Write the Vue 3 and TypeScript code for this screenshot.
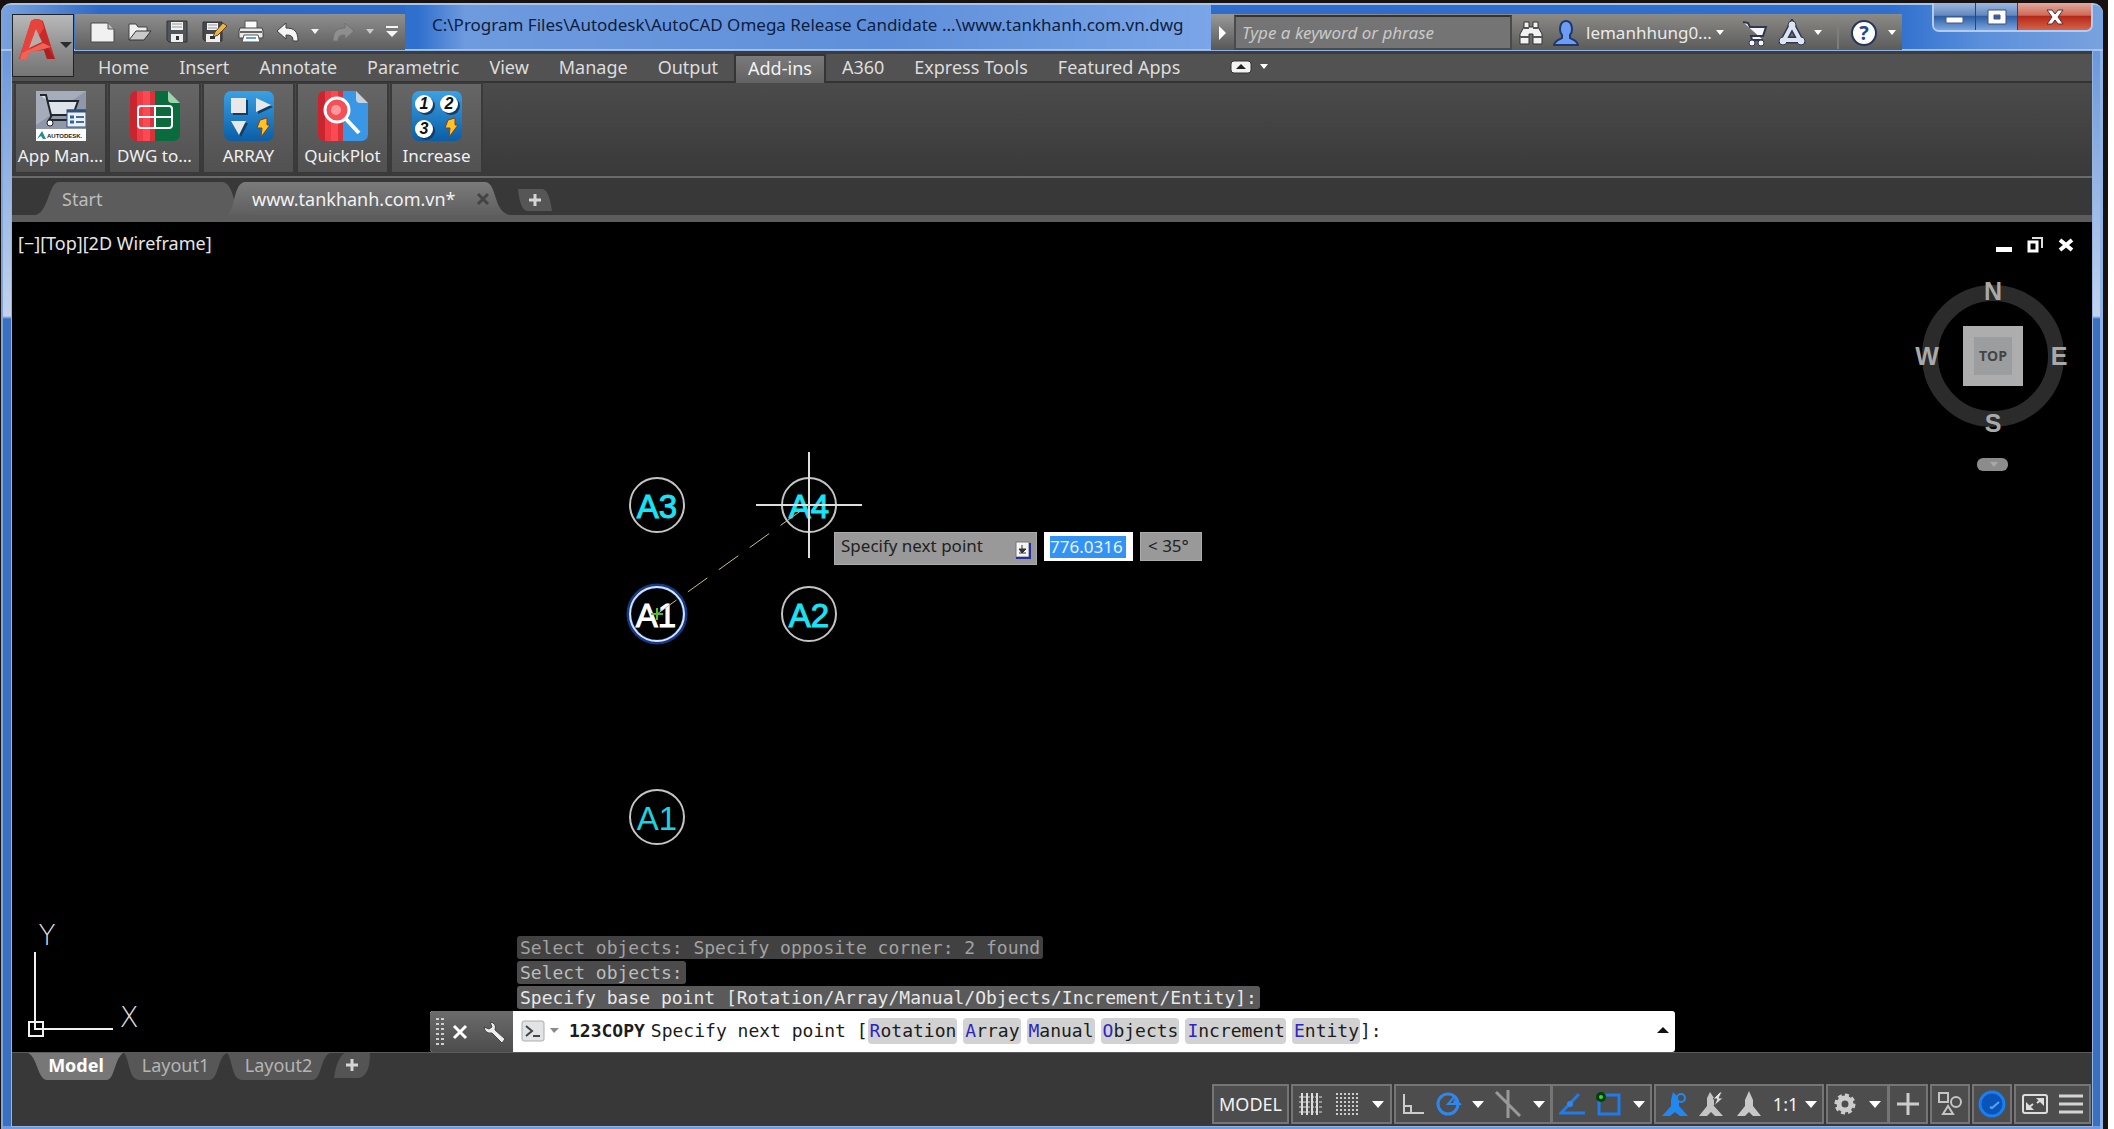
<script setup lang="ts">
import { ref } from 'vue'

const ribbonTabs = [
  'Home', 'Insert', 'Annotate', 'Parametric', 'View', 'Manage',
  'Output', 'Add-ins', 'A360', 'Express Tools', 'Featured Apps',
]
const activeTab = ref('Add-ins')

const history = [
  { text: 'Select objects: Specify opposite corner: 2 found', tone: 'old' },
  { text: 'Select objects:', tone: 'mid' },
  { text: 'Specify base point [Rotation/Array/Manual/Objects/Increment/Entity]:', tone: 'new' },
]
const options = ['Rotation', 'Array', 'Manual', 'Objects', 'Increment', 'Entity']

interface Bubble { x: number; y: number; label: string; tone: string }
const bubbles: Bubble[] = [
  { x: 645, y: 283, label: 'A3', tone: 'bold' },
  { x: 797, y: 283, label: 'A4', tone: 'bold' },
  { x: 797, y: 392, label: 'A2', tone: 'bold' },
  { x: 645, y: 595, label: 'A1', tone: 'plain' },
]
const search = ref('')
const distance = ref('776.0316')
const gridDots = [0, 1, 2, 3, 4, 5]
</script>

<template>
  <div class="desktop">
    <div class="window">
      <header class="titlebar">
        <button class="app-button" aria-label="Application menu">
          <svg width="61" height="61" viewBox="0 0 61 61">
            <path d="M6 44 18 6q5-4 12 0l12 38h-8l-3-9-15 2-2 7z" fill="#c9292b" />
            <path d="M18 6q5-4 11 0l2 7-12 18-4 6-9 7z" fill="#e8433b" />
            <path d="M23 14l6 13-13 6z" fill="#b5aeab" />
            <path d="M9 38l21-10 8 4-22 6-2 6H7z" fill="#ef6355" />
            <path d="M31 35l4-2 7 11h-8z" fill="#a91f24" />
            <path d="M47 27h12l-6 6z" fill="#2b2b2b" />
          </svg>
        </button>
        <nav class="qat" aria-label="Quick access">
          <button aria-label="New"><svg width="28" height="26" viewBox="0 0 28 26"><path d="M2 4h17l6 6v13H2z" fill="#f1f1f1" stroke="#494949" /><path d="M19 4v6h6" fill="#bbb" stroke="#555" /></svg></button>
          <button aria-label="Open"><svg width="28" height="26" viewBox="0 0 28 26"><path d="M3 21V5h7l2 3h9v4" fill="#f1f1f1" stroke="#444" /><path d="M3 21l7-9h15l-7 9z" fill="#c9c9c9" stroke="#333" /></svg></button>
          <button aria-label="Save"><svg width="28" height="26" viewBox="0 0 28 26"><path d="M4 2h20v21H6l-2-2z" fill="#50545b" stroke="#333" /><path d="M8 3h12v8H8z" fill="#f2f2f2" /><path d="M9 5h10M9 8h10" stroke="#999" /><path d="M8 15h12v8H8z" fill="#eee" /><path d="M13 17h3v4h-3z" fill="#333" /></svg></button>
          <button aria-label="Save As"><svg width="28" height="26" viewBox="0 0 28 26"><path d="M3 3h19v19H5l-2-2z" fill="#45484d" stroke="#333" /><path d="M7 4h11v7H7z" fill="#f2f2f2" /><path d="M8 6h9M8 9h9" stroke="#999" /><path d="M6 15h14v8H6z" fill="#eee" /><path d="M13 18l2-5 8-9 4 3-9 9z" fill="#f1b443" stroke="#5b4420" /><path d="M10 17h5v3h-5z" fill="#333" /></svg></button>
          <button aria-label="Plot"><svg width="28" height="26" viewBox="0 0 28 26"><path d="M8 2h12v8H8z" fill="#fafafa" stroke="#555" /><path d="M3 9h22l1 3v7H2v-7z" fill="#e9e9e9" stroke="#444" /><path d="M3 13h22" stroke="#666" stroke-width="2" /><path d="M7 16h14l2 7H5z" fill="#fff" stroke="#555" /><path d="M9 19h10" stroke="#68a0d6" stroke-width="2" /></svg></button>
          <button aria-label="Undo"><svg width="28" height="26" viewBox="0 0 28 26"><path d="M3 12l9-8v5c8 0 12 3 12 13h-5c0-5-2-6-7-6v4z" fill="#f4f4f4" stroke="#3f3f3f" /></svg></button>
          <button class="caret" aria-label="Undo list"><svg width="10" height="6"><path d="M1 0h8L5 5z" fill="#f4f4f4" /></svg></button>
          <button aria-label="Redo"><svg width="28" height="26" viewBox="0 0 28 26"><path d="M25 12l-9-8v5c-8 0-12 3-12 13h5c0-5 2-6 7-6v4z" fill="#8e8e8e" stroke="#707070" /></svg></button>
          <button class="caret" aria-label="Redo list"><svg width="10" height="6"><path d="M1 0h8L5 5z" fill="#ccc" /></svg></button>
          <button class="more" aria-label="Customize"><svg width="14" height="14"><path d="M1 2h12" stroke="#f4f4f4" stroke-width="2" /><path d="M1 6h12l-6 6z" fill="#f4f4f4" /></svg></button>
        </nav>
        <h1 class="caption">C:\Program Files\Autodesk\AutoCAD Omega Release Candidate ...\www.tankhanh.com.vn.dwg</h1>
        <div class="infocenter">
          <button class="expander" aria-label="Collapse search"><svg width="8" height="14"><path d="M0 0l7 7-7 7z" fill="#fff" /></svg></button>
          <input v-model="search" class="search" type="text" aria-label="Search" placeholder="Type a keyword or phrase">
          <button class="info-find" aria-label="Find"><svg width="28" height="26" viewBox="0 0 28 26"><path d="M7 2h5v5h4V2h5v5l4 7v10h-9V14h-4v10H3V14l4-7z" fill="#f2f2f2" stroke="#333" /><path d="M7 8h5M16 8h5M3 17h9M16 17h9" stroke="#555" stroke-width="2" /></svg></button>
          <button class="user"><svg width="26" height="28" viewBox="0 0 26 28"><path d="M1 26c1-5 5-5 8-7v-3C6 13 6 2 13 2s7 11 4 14v3c3 2 7 2 8 7z" fill="#6d9df0" stroke="#1d3770" stroke-width="2" /></svg><span>lemanhhung0...</span><svg width="10" height="6"><path d="M1 0h8L5 5z" fill="#fff" /></svg></button>
          <button class="info-cart" aria-label="App store"><svg width="28" height="28" viewBox="0 0 28 28"><path d="M2 3l5 1 2 4h16l-3 9H10l1 4h11" fill="#f5f5f8" stroke="#30364e" stroke-width="2" /><circle cx="11" cy="24" r="3" fill="#f5f5f8" stroke="#30364e" /><circle cx="20" cy="24" r="3" fill="#f5f5f8" stroke="#30364e" /></svg></button>
          <button class="info-net" aria-label="A360"><svg width="28" height="28" viewBox="0 0 28 28"><path d="M14 6 6 21h16z" fill="none" stroke="#303852" stroke-width="7" /><circle cx="14" cy="6" r="4" fill="#dfe4f2" stroke="#303852" /><circle cx="5" cy="22" r="4" fill="#dfe4f2" stroke="#303852" /><circle cx="23" cy="22" r="4" fill="#dfe4f2" stroke="#303852" /><path d="M14 6 6 21h16z" fill="none" stroke="#dfe4f2" stroke-width="4" /></svg><svg width="10" height="6"><path d="M1 0h8L5 5z" fill="#fff" /></svg></button>
          <span class="rule" />
          <button class="info-help" aria-label="Help"><svg width="28" height="28" viewBox="0 0 28 28"><circle cx="14" cy="14" r="12" fill="#fff" stroke="#25345c" stroke-width="2" /><text x="14" y="21" text-anchor="middle" class="q">?</text></svg><svg width="10" height="6"><path d="M1 0h8L5 5z" fill="#fff" /></svg></button>
        </div>
        <div class="controls">
          <button class="min" aria-label="Minimize"><svg width="22" height="20"><rect x="2" y="10" width="17" height="6" rx="1" fill="#fff" stroke="#44597e" /></svg></button>
          <button class="max" aria-label="Restore"><svg width="22" height="20"><path d="M2 3h18v14H2zM8 8v4h6V8z" fill="#fff" fill-rule="evenodd" stroke="#3f5276" /></svg></button>
          <button class="close" aria-label="Close"><svg width="22" height="20"><path d="M3 3h5l3 4 3-4h5l-5 7 5 7h-5l-3-4-3 4H3l5-7z" fill="#fff" stroke="#5a2c33" /></svg></button>
        </div>
      </header>

      <div class="body">
        <nav class="tabs" aria-label="Ribbon tabs">
          <button v-for="t in ribbonTabs" :key="t" :class="{ on: t === activeTab }" @click="activeTab = t">{{ t }}</button>
          <button class="fold" aria-label="Minimize ribbon">
            <svg width="22" height="14"><rect x="1" y="1" width="20" height="12" rx="3" fill="#f3f3f3" stroke="#333" /><path d="M6 9l5-5 5 5z" fill="#222" /></svg>
            <svg width="10" height="6"><path d="M1 0h8L5 5z" fill="#fff" /></svg>
          </button>
        </nav>

        <section class="ribbon">
          <button class="panel">
            <svg width="50" height="50" viewBox="0 0 50 50">
              <rect width="50" height="50" fill="#fff" /><rect width="50" height="38" fill="#8f97a8" /><path d="M0 0h50L0 34z" fill="#a5acba" />
              <path d="M4 4h6l5 20h22l5-14H12" fill="#dfe3ea" stroke="#22262f" stroke-width="2" /><path d="M16 24l-3 5h20" fill="none" stroke="#22262f" stroke-width="2" />
              <circle cx="14" cy="32" r="3" fill="#fff" stroke="#222" /><rect x="31" y="19" width="19" height="17" fill="#e8f0fb" stroke="#31507c" /><path d="M31 20h19" stroke="#31507c" stroke-width="3" /><path d="M34 26h4M34 31h4" stroke="#315f9c" stroke-width="3" /><path d="M40 26h8M40 31h8" stroke="#4a6a98" stroke-width="2" />
              <path d="M1 48l5-8 4 8H7l-2-3z" fill="#1b8f9c" /><text x="11" y="47" class="brand">AUTODESK.</text>
            </svg>
            <span>App Man...</span>
          </button>
          <button class="panel">
            <svg width="50" height="50" viewBox="0 0 50 50">
              <defs><clipPath id="r1"><path d="M7 0h31l12 12v31q0 7-7 7H7q-7 0-7-7V7q0-7 7-7z" /></clipPath></defs>
              <g clip-path="url(#r1)"><path d="M0 0h7v50H0z" fill="#c9252f" /><path d="M7 0h7v50H7z" fill="#ee3b45" /><path d="M13 0h11v50H13z" fill="#fb4a52" /><path d="M20 0h5v50h-5z" fill="#d8323b" /><path d="M25 0h25v50H25z" fill="#0a6b3c" /></g>
              <path d="M38 0v8q0 4 4 4h8z" fill="#9fd3ae" />
              <rect x="8" y="15" width="34" height="22" rx="3" fill="none" stroke="#fff" stroke-width="2" /><path d="M25 15v22M8 26h34" stroke="#fff" stroke-width="2" />
            </svg>
            <span>DWG to...</span>
          </button>
          <button class="panel">
            <svg width="50" height="50" viewBox="0 0 50 50">
              <defs><linearGradient id="b1" x2="0" y2="1"><stop stop-color="#3ba0e4" /><stop offset="1" stop-color="#0a5ea6" /></linearGradient></defs>
              <rect width="50" height="50" rx="7" fill="url(#b1)" />
              <path d="M9 9h15v15H9z" fill="#123d66" /><path d="M7 7h15v15H7z" fill="#e8e8e8" /><path d="M34 9l15 7-15 7z" fill="#123d66" /><path d="M32 7l15 7-15 7z" fill="#e8e8e8" /><path d="M9 32h15l-7 14z" fill="#123d66" /><path d="M7 30h15l-7 14z" fill="#e8e8e8" />
              <path d="M36 29l7-2 0 7 3 0-9 12 1-9h-5z" fill="#ffc323" stroke="#8a3c1a" />
            </svg>
            <span>ARRAY</span>
          </button>
          <button class="panel">
            <svg width="50" height="50" viewBox="0 0 50 50">
              <g clip-path="url(#r1)"><path d="M0 0h7v50H0z" fill="#c9252f" /><path d="M7 0h7v50H7z" fill="#ee3b45" /><path d="M13 0h11v50H13z" fill="#fb4a52" /><path d="M20 0h5v50h-5z" fill="#d8323b" /><path d="M25 0h25v50H25z" fill="#3a97e6" /></g>
              <path d="M38 0v8q0 4 4 4h8z" fill="#c5d3df" />
              <circle cx="19" cy="19" r="12" fill="#f4505a" stroke="#fff" stroke-width="3" /><circle cx="18" cy="19" r="5" fill="#ff9a9a" /><path d="M28 28l13 14" stroke="#fff" stroke-width="4" />
            </svg>
            <span>QuickPlot</span>
          </button>
          <button class="panel">
            <svg width="50" height="50" viewBox="0 0 50 50">
              <rect width="50" height="50" rx="7" fill="url(#b1)" />
              <g fill="#123d66"><circle cx="14" cy="15" r="9" /><circle cx="39" cy="15" r="9" /><circle cx="14" cy="40" r="9" /></g>
              <g fill="#fff"><circle cx="12" cy="13" r="9" /><circle cx="37" cy="13" r="9" /><circle cx="12" cy="38" r="9" /></g>
              <g class="num"><text x="12" y="18">1</text><text x="37" y="18">2</text><text x="12" y="43">3</text></g>
              <path d="M36 29l7-2 0 7 3 0-9 12 1-9h-5z" fill="#ffc323" stroke="#8a3c1a" />
            </svg>
            <span>Increase</span>
          </button>
        </section>

        <nav class="files" aria-label="Drawings">
          <button class="file start">
            <svg class="shape" width="200" height="33" viewBox="0 0 200 33" preserveAspectRatio="none"><path d="M0 33C14 33 14 0 24 0h158c14 0 12 33 18 33z" fill="#5c5c5c" /></svg>
            <span>Start</span>
          </button>
          <button class="file current">
            <svg class="shape" width="290" height="33" viewBox="0 0 290 33" preserveAspectRatio="none"><defs><linearGradient id="g1" x2="0" y2="1"><stop stop-color="#7b7b7b" /><stop offset="1" stop-color="#5f5f5f" /></linearGradient></defs><path d="M0 33C10 33 6 0 20 0h242c14 0 8 33 28 33z" fill="url(#g1)" /></svg>
            <span>www.tankhanh.com.vn*</span>
            <svg width="14" height="14"><path d="M2 2l10 10M12 2L2 12" stroke="#444" stroke-width="3" /></svg>
          </button>
          <button class="file-add" aria-label="New drawing"><svg width="36" height="22" viewBox="0 0 36 22"><path d="M1 0h24q7 0 10 22H11Q3 22 1 0z" fill="#565656" /><path d="M18 5v12M12 11h12" stroke="#d6d6d6" stroke-width="3" /></svg></button>
        </nav>

        <main class="canvas">
          <svg class="drawing">
            <g fill="none" stroke="#c4c4c4" stroke-width="2">
              <circle v-for="b in bubbles" :key="b.label + b.y" :cx="b.x" :cy="b.y" r="27" />
            </g>
            <text v-for="b in bubbles" :key="'t' + b.label + b.y" :x="b.x" :y="b.y + 13" class="tag" :class="b.tone">{{ b.label }}</text>
            <circle cx="645" cy="392" r="28" fill="none" stroke="#123a86" stroke-width="5" />
            <circle cx="645" cy="392" r="27" fill="none" stroke="#d5e3ff" stroke-width="2" />
            <text x="644" y="405" class="tag picked">A1</text>
            <path d="M645 392 797 283" stroke="#c8bb8c" stroke-dasharray="24 14" />
            <path d="M639 392h12M645 386v12" stroke="#4fbf2f" stroke-width="2" />
            <path d="M797 230v106M744 283h106" stroke="#dedede" stroke-width="2" />
          </svg>

          <div class="prompt">
            <label class="prompt-text" for="dist">Specify next point
              <svg width="16" height="18"><rect x="1" y="1" width="13" height="15" fill="#f4f4f4" stroke="#777" /><path d="M1 17h14V2" fill="none" stroke="#2430a8" stroke-width="2" /><path d="M7 4v6M4 12h7M4 8h7l-4 4z" stroke="#333" fill="#333" /></svg>
            </label>
            <div class="prompt-box"><input id="dist" v-model="distance" type="text"></div>
            <output class="prompt-angle">&lt; 35°</output>
          </div>

          <span class="view-label">[−][Top][2D Wireframe]</span>
          <div class="view-buttons">
            <button aria-label="Minimize view"><svg width="18" height="18"><path d="M1 11h16v5H1z" fill="#fff" /></svg></button>
            <button aria-label="Restore view"><svg width="18" height="18"><path d="M6 2h10v10" fill="none" stroke="#ddd" stroke-width="2" /><path d="M3 6h8v9H3z" fill="none" stroke="#fff" stroke-width="3" /></svg></button>
            <button aria-label="Close view"><svg width="18" height="18"><path d="M3 4l12 10M15 4L3 14" stroke="#fff" stroke-width="4" /></svg></button>
          </div>

          <div class="cube">
            <svg width="150" height="190" viewBox="0 0 150 190">
              <circle cx="75" cy="75" r="63" fill="none" stroke="#2b2b2b" stroke-width="16" />
              <rect x="45" y="45" width="60" height="60" fill="#adadad" /><rect x="56" y="56" width="38" height="38" fill="#9b9d9f" />
              <text x="75" y="80" class="top">TOP</text>
              <g class="dir"><text x="75" y="19">N</text><text x="75" y="151">S</text><text x="9" y="84">W</text><text x="141" y="84">E</text></g>
              <rect x="59" y="177" width="31" height="13" rx="6" fill="#8c8c8c" /><path d="M72 181h8l-4 5z" fill="#a9a9a9" />
            </svg>
          </div>

          <svg class="ucs" width="130" height="130" viewBox="0 0 130 130">
            <path d="M10 35v78M10 112h78" stroke="#f0f0f0" stroke-width="2" fill="none" /><rect x="4" y="105" width="14" height="14" fill="none" stroke="#f0f0f0" stroke-width="2" />
            <text x="22" y="28">Y</text><text x="104" y="110">X</text>
          </svg>

          <div class="console">
            <p v-for="h in history" :key="h.text" :class="h.tone">{{ h.text }}</p>
            <div class="cmd">
              <div class="grip">
                <svg width="10" height="28"><g fill="#cfcfcf"><template v-for="n in gridDots" :key="n"><rect x="1" :y="n * 5" width="3" height="2" /><rect x="6" :y="n * 5" width="3" height="2" /></template></g></svg>
                <button aria-label="Close command line"><svg width="16" height="16"><path d="M2 2l12 12M14 2L2 14" stroke="#fff" stroke-width="3" /></svg></button>
                <button aria-label="Command settings"><svg width="24" height="24" viewBox="0 0 24 24"><path d="M7 2q7 1 5 8l10 9-3 4L9 13Q2 14 1 7l5 2 3-2z" fill="#eee" stroke="#444" /></svg></button>
              </div>
              <div class="entry">
                <button class="recent" aria-label="Recent commands"><svg width="24" height="22"><rect x="1" y="1" width="22" height="20" rx="2" fill="#e1e3e5" stroke="#a9adb1" /><path d="M5 6l6 5-6 5M12 16h7" fill="none" stroke="#444" stroke-width="2" /></svg><svg width="9" height="6"><path d="M0 0h9L4 5z" fill="#8a8a8a" /></svg></button>
                <strong>123COPY</strong><span class="ask">Specify next point [</span>
                <button v-for="o in options" :key="o" class="opt"><i>{{ o[0] }}</i>{{ o.slice(1) }}</button><span>]:</span>
                <button class="up" aria-label="Show history"><svg width="12" height="7"><path d="M0 6l6-6 6 6z" fill="#111" /></svg></button>
              </div>
            </div>
          </div>
        </main>

        <footer class="bottom">
          <nav class="layouts" aria-label="Layouts">
            <button class="layout first"><svg class="shape" width="100" height="27" viewBox="0 0 100 27" preserveAspectRatio="none"><path d="M0 0h99C90 6 90 27 82 27H20C10 27 10 4 0 0z" fill="#777" /></svg><span>Model</span></button>
            <button class="layout"><svg class="shape" width="104" height="27" viewBox="0 0 104 27" preserveAspectRatio="none"><path d="M0 0h104C94 4 96 27 86 27H16C4 27 6 6 0 0z" fill="#575757" /></svg><span>Layout1</span></button>
            <button class="layout"><svg class="shape" width="104" height="27" viewBox="0 0 104 27" preserveAspectRatio="none"><path d="M0 0h104C94 4 96 27 86 27H16C4 27 6 6 0 0z" fill="#575757" /></svg><span>Layout2</span></button>
            <button class="layout-add" aria-label="New layout"><svg width="38" height="25" viewBox="0 0 38 25"><path d="M12 0h25q0 24-12 25H1Q4 4 12 0z" fill="#545454" /><path d="M19 6v12M13 12h12" stroke="#d6d6d6" stroke-width="3" /></svg></button>
          </nav>
          <div class="status">
            <button class="seg s-model">MODEL</button>
            <div class="seg s-grid">
              <button aria-label="Grid"><svg width="24" height="24"><path d="M3 1v22M8 1v22M13 1v22M18 1v22" stroke="#ddd" stroke-width="2" /><path d="M0 5h24M0 10h24M0 15h24M0 20h24" stroke="#ddd" stroke-dasharray="3 1" /></svg></button>
              <button aria-label="Snap"><svg width="24" height="24"><path v-for="n in gridDots" :key="n" :d="`M1 ${2 + n * 4}h22`" stroke="#ccc" stroke-width="2" stroke-dasharray="2 2" /></svg></button>
              <button class="dd" aria-label="Snap settings"><svg width="12" height="7"><path d="M0 0h12L6 7z" fill="#fff" /></svg></button>
            </div>
            <div class="seg s-ortho">
              <button aria-label="Ortho"><svg width="24" height="24"><path d="M3 2v19h20M4 14h6v7" fill="none" stroke="#ccc" stroke-width="2" /></svg></button>
              <button aria-label="Polar"><svg width="26" height="26"><circle cx="12" cy="13" r="10" fill="none" stroke="#2f86ee" stroke-width="3" /><path d="M19 5l-7 8h13" fill="none" stroke="#2f86ee" stroke-width="2" /><path d="M18 8l8 6h-9z" fill="#2f86ee" /></svg></button>
              <button class="dd" aria-label="Polar settings"><svg width="12" height="7"><path d="M0 0h12L6 7z" fill="#fff" /></svg></button>
              <button aria-label="Isometric"><svg width="28" height="30"><path d="M2 3l24 24M14 1v28" stroke="#999" stroke-width="3" /></svg></button>
              <button class="dd" aria-label="Isometric settings"><svg width="12" height="7"><path d="M0 0h12L6 7z" fill="#fff" /></svg></button>
            </div>
            <div class="seg s-snap">
              <button aria-label="Object tracking"><svg width="26" height="24"><path d="M20 2 2 21h24" fill="none" stroke="#1f7bea" stroke-width="3" /><circle cx="11" cy="12" r="3" fill="#2f86ee" /></svg></button>
              <button aria-label="Object snap"><svg width="26" height="26"><rect x="3" y="4" width="20" height="19" fill="none" stroke="#1f7bea" stroke-width="3" /><circle cx="5" cy="6" r="5" fill="#073d0c" /><circle cx="5" cy="6" r="2" fill="#27e03a" /></svg></button>
              <button class="dd" aria-label="Object snap settings"><svg width="12" height="7"><path d="M0 0h12L6 7z" fill="#fff" /></svg></button>
            </div>
            <div class="seg s-anno">
              <button aria-label="Annotation visibility"><svg width="28" height="28" viewBox="0 0 28 28"><path d="M12 2l-2 8v6L1 26h8l5-4 5 4h8l-9-10V8z" fill="#2288f0" /><circle cx="20" cy="8" r="4" fill="#4d4d4d" stroke="#2288f0" stroke-width="2" /></svg></button>
              <button aria-label="Auto scale"><svg width="28" height="28" viewBox="0 0 28 28"><path d="M12 2l-3 6v8L1 26h8l4-4 4 4h8l-9-10V8z" fill="#c4c4c4" /><path d="M22 2l-7 7h4l-3 7 9-8h-4l3-6z" fill="#e2e2e2" stroke="#555" /></svg></button>
              <button aria-label="Annotation scale"><svg width="28" height="28" viewBox="0 0 28 28"><path d="M14 1l-4 9v6L2 26h8l4-4 4 4h8l-8-10v-6z" fill="#c8c8c8" /></svg></button>
              <button class="scale">1:1<svg width="12" height="7"><path d="M0 0h12L6 7z" fill="#fff" /></svg></button>
            </div>
            <div class="seg s-gear">
              <button aria-label="Workspace"><svg width="22" height="22" viewBox="0 0 22 22"><circle cx="11" cy="11" r="6" fill="none" stroke="#ccc" stroke-width="5" /><circle cx="11" cy="11" r="9" fill="none" stroke="#ccc" stroke-width="3" stroke-dasharray="4 3" /></svg></button>
              <button class="dd" aria-label="Workspace list"><svg width="12" height="7"><path d="M0 0h12L6 7z" fill="#fff" /></svg></button>
            </div>
            <button class="seg s-one joined" aria-label="Annotation monitor"><svg width="24" height="24"><path d="M12 1v22M1 12h22" stroke="#ccc" stroke-width="3" /></svg></button>
            <button class="seg s-one" aria-label="Isolate objects"><svg width="26" height="26"><g fill="none" stroke="#c4c4c4" stroke-width="2"><rect x="2" y="2" width="9" height="9" /><circle cx="19" cy="11" r="5" /><path d="M11 15l-5 8h10z" /></g></svg></button>
            <button class="seg s-one" aria-label="Hardware acceleration"><svg width="28" height="28"><circle cx="14" cy="14" r="12" fill="#0a53b8" stroke="#1a7df0" stroke-width="3" /><path d="M12 17l2 1 7-6" fill="none" stroke="#58a4f5" stroke-width="2" /></svg></button>
            <div class="seg s-end">
              <button aria-label="Clean screen"><svg width="26" height="20"><rect x="1" y="1" width="24" height="18" rx="2" fill="none" stroke="#ddd" stroke-width="2" /><path d="M4 8v8h8zM14 4h8v8z" fill="#ddd" /><path d="M6 14l5-4M15 9l5-4" stroke="#ddd" stroke-width="2" /></svg></button>
              <button aria-label="Customization"><svg width="24" height="20"><path d="M0 2h24M0 10h24M0 18h24" stroke="#d4d4d4" stroke-width="3" /></svg></button>
            </div>
          </div>
        </footer>
      </div>
    </div>
  </div>
</template>

<style>
body { background: #fff; }
</style>

<style scoped>
* { box-sizing: border-box; }
.desktop {
  display: flex; min-height: 100vh; padding: 3px 11px 0 1px;
  background: linear-gradient(to left, #fff 6px, #17120f 6px);
  font-family: "Noto Sans", "Open Sans", sans-serif; font-size: 17px; line-height: 24px; color: #ddd;
}
button { display: flex; align-items: center; justify-content: center; margin: 0; padding: 0; border: 0; background: none; color: inherit; font: inherit; white-space: nowrap; cursor: pointer; }
svg { display: block; flex: none; }
.window {
  position: relative; display: flex; flex: 1; flex-direction: column; min-width: 0; padding: 0 11px 3px;
  border-radius: 10px 10px 0 0; border-top: 2px solid #a5c5ee;
  background: linear-gradient(#6b98da 48px, #c3d3ee 311px, #3b6fbf 314px);
  box-shadow: inset 2px 0 #7ea5dc, inset -3px 0 #8eb2e4, inset 0 -3px #6f9be0;
}
.titlebar {
  display: flex; align-items: flex-start; height: 46px; margin: 0 -11px; padding-left: 74px;
  background: linear-gradient(90deg, #7ba3dd, #2d69c6 100px, #2f6fce calc(100% - 210px), #5c8fdb calc(100% - 120px), #79a2de);
  border-bottom: 2px solid #a9c4ea; border-radius: 9px 9px 0 0;
}
.app-button { position: absolute; z-index: 2; left: 11px; top: 9px; width: 62px; height: 63px; border: 1px solid #222; background: linear-gradient(#b9b9b9, #8c8c8c 60%, #747474); }
.qat { display: flex; align-items: stretch; width: 330px; height: 37px; margin-top: 9px; padding-left: 9px; background: linear-gradient(#8f8f8f, #5c5c5c); }
.qat button { width: 37px; padding-bottom: 2px; }
.qat .caret { width: 18px; }
.qat .more { width: 26px; }
.caption {
  flex: 1; min-width: 0; height: 44px; margin: 0; padding: 8px 0 0 27px; overflow: hidden; white-space: nowrap;
  font-size: 17px; font-weight: 400; line-height: 24px; color: #0d2040;
  background: linear-gradient(90deg, #2f6fce00 12px, #6e9ade 60px, #5f8fda 60%, #7aa6e8), #2f6fce;
}
.infocenter { display: flex; align-items: center; width: 691px; height: 37px; margin-top: 9px; background: linear-gradient(#8b8a86, #5a5a5a); }
.expander { width: 23px; height: 37px; background: linear-gradient(#999, #555); }
.search { width: 278px; height: 35px; padding: 0 6px; border: 2px solid #4a4a4a; border-top-color: #333; background: #747474; color: #eee; font: italic 17px/24px "Noto Sans", sans-serif; }
.search::placeholder { color: #c9c9c9; opacity: 1; }
.info-find { width: 38px; }
.user { gap: 7px; width: 190px; padding-left: 3px; color: #eaeaea; justify-content: flex-start; }
.user svg:last-child { margin-left: -4px; }
.info-cart { width: 30px; }
.info-net { gap: 7px; width: 60px; }
.rule { width: 2px; height: 27px; margin: 6px 9px 0 7px; background: #7d7d7d; }
.info-help { gap: 9px; width: 50px; }
.q { font: bold 20px "Open Sans", sans-serif; fill: #26478f; }
.controls { display: flex; width: 161px; height: 29px; margin: -2px 10px 0 30px; border: 2px solid #b2cbee; border-top: 0; border-radius: 0 0 7px 7px; overflow: hidden; }
.controls button { flex: 1; background: linear-gradient(#9cb9e0, #6388bf 45%, #2f5da4 50%, #7ba5de); border-right: 1px solid #26457c; }
.controls .close { flex: none; width: 73px; border: 0; background: linear-gradient(#e2aaa0, #cf6a58 45%, #b5291a 50%, #d5644a); }

.body { display: flex; flex: 1; flex-direction: column; min-width: 0; background: #383838; box-shadow: 0 0 0 1px #93b5e6; }
.tabs { display: flex; align-items: flex-end; height: 32px; padding-left: 71px; background: #525252; border-top: 3px solid #3c3c3c; border-bottom: 2px solid #333; font-size: 18px; }
.tabs button { height: 27px; padding: 0 14px 2px; margin: 0 1px; }
.tabs .on { height: 29px; margin-bottom: -2px; padding: 0 12px 3px; border: 2px solid #353535; border-bottom: 0; background: linear-gradient(#7a7a7a, #626262); color: #f2f2f2; }
.tabs .fold { gap: 7px; margin-left: 21px; }
.ribbon { display: flex; gap: 5px; height: 95px; padding: 1px 4px 4px; background: linear-gradient(#4b4b4b, #393939); border-bottom: 2px solid #6a6a6a; }
.panel { flex-direction: column; justify-content: flex-start; gap: 3px; width: 89px; padding-top: 7px; background: linear-gradient(#666, #515151); box-shadow: 0 0 0 2px #3a3a3a; color: #f0f0f0; }
.brand { font: bold 6px "Liberation Sans", sans-serif; fill: #222; }
.num { font: italic bold 16px "Liberation Sans", sans-serif; text-anchor: middle; fill: #111; }
.files { display: flex; align-items: flex-end; height: 44px; padding: 0 0 7px 22px; background: linear-gradient(#383838 37px, #5c5c5c 37px); font-size: 18px; }
.file { position: relative; height: 33px; justify-content: flex-start; color: #bdbdbd; }
.shape { position: absolute; inset: 0; width: 100%; height: 100%; }
.file > :not(.shape), .layout > :not(.shape) { position: relative; }
.start { width: 206px; padding-left: 28px; }
.current { gap: 20px; width: 286px; margin-left: -14px; padding-left: 26px; color: #f2f2f2; }
.file-add { margin: 0 0 4px 5px; }

.canvas { position: relative; flex: 1; min-height: 760px; background: #000; overflow: hidden; }
.drawing { position: absolute; inset: 0; width: 100%; height: 100%; }
.tag { font: 33px "Liberation Sans", sans-serif; text-anchor: middle; fill: #19d3e0; }
.tag.bold { fill: #19e3f5; stroke: #19e3f5; stroke-width: 1px; }
.tag.picked { fill: #fff; stroke: #fff; stroke-width: 1px; }
.prompt { position: absolute; left: 822px; top: 310px; display: flex; align-items: flex-start; gap: 7px; color: #222; }
.prompt-text { display: flex; align-items: center; justify-content: space-between; width: 203px; height: 33px; padding: 0 5px 6px 6px; background: #999; border: 1px solid #aaa; }
.prompt-text svg { position: relative; top: 4px; }
.prompt-box { width: 89px; height: 29px; padding: 3px 6px; background: #fff; }
.prompt-box input { width: 76px; height: 22px; padding: 0; border: 0; background: #3393f5; color: #e8f2ff; font: 17px/22px "Noto Sans", sans-serif; }
.prompt-angle { width: 62px; height: 29px; padding: 1px 7px; background: #999; border: 1px solid #aaa; }
.view-label { position: absolute; left: 6px; top: 9px; color: #e6e6e6; font-size: 18px; }
.view-buttons { position: absolute; right: 17px; top: 14px; display: flex; gap: 13px; }
.cube { position: absolute; right: 24px; top: 59px; }
.cube svg { overflow: visible; }
.top { font: bold 14px "Open Sans", sans-serif; text-anchor: middle; fill: #444; }
.dir { font: bold 25px "Liberation Sans", sans-serif; text-anchor: middle; fill: #a9a9a9; }
.ucs { position: absolute; left: 13px; bottom: 5px; }
.ucs text { font: 200 28px "DejaVu Sans", sans-serif; text-anchor: middle; fill: #ddd; }
.console { position: absolute; left: 418px; right: 417px; bottom: 0; font-family: "DejaVu Sans Mono", monospace; font-size: 18px; }
.console p { width: max-content; height: 23px; margin: 0 0 2px 87px; padding: 0 3px; border-radius: 3px; line-height: 23px; background: #4b4b4b; }
.console .old { color: #a2a2a2; background: #414141; }
.console .mid { color: #bcbcbc; }
.console .new { color: #e8e8e8; background: #5a5a5a; }
.cmd { display: flex; height: 41px; border-radius: 3px; background: #fff; overflow: hidden; }
.grip { display: flex; align-items: center; gap: 7px; width: 83px; padding-left: 5px; background: linear-gradient(#6c6c6c, #4c4c4c); }
.grip button + button { margin-left: 8px; }
.entry { display: flex; flex: 1; align-items: center; min-width: 0; padding: 0 6px 2px 8px; color: #1c1c1c; white-space: pre; }
.recent { gap: 5px; margin-right: 10px; }
.ask { margin-left: 6px; }
.opt { height: 26px; padding: 0 1px 0 2px; border-radius: 4px; background: #d2d2d2; }
.opt + .opt { margin-left: 6px; }
.opt i { font-style: normal; color: #2b25c4; }
.up { margin-left: auto; }

.bottom { display: flex; flex-direction: column; background: #383838; border-top: 1px solid #5a5a5a; }
.layouts { display: flex; align-items: flex-start; height: 31px; padding-left: 16px; color: #b4b4b4; font-size: 18px; }
.layout { position: relative; width: 103px; height: 27px; padding-bottom: 4px; }
.layout.first { width: 96px; color: #fff; font-weight: 700; }
.layout-add { margin-left: 3px; }
.status { display: flex; justify-content: flex-end; gap: 2px; height: 42px; padding: 0 1px 2px 0; }
.seg { display: flex; align-items: center; justify-content: space-around; border: 2px solid #757575; background: #4d4d4d; color: #f2f2f2; font-size: 18px; }
.s-model { width: 77px; }
.s-grid { width: 101px; }
.s-ortho { width: 158px; }
.s-snap { width: 101px; margin-left: -3px; }
.s-anno { width: 170px; }
.scale { gap: 7px; }
.s-gear { width: 63px; }
.s-one { width: 40px; }
.joined { margin-left: -3px; }
.s-end { width: 77px; }
</style>
